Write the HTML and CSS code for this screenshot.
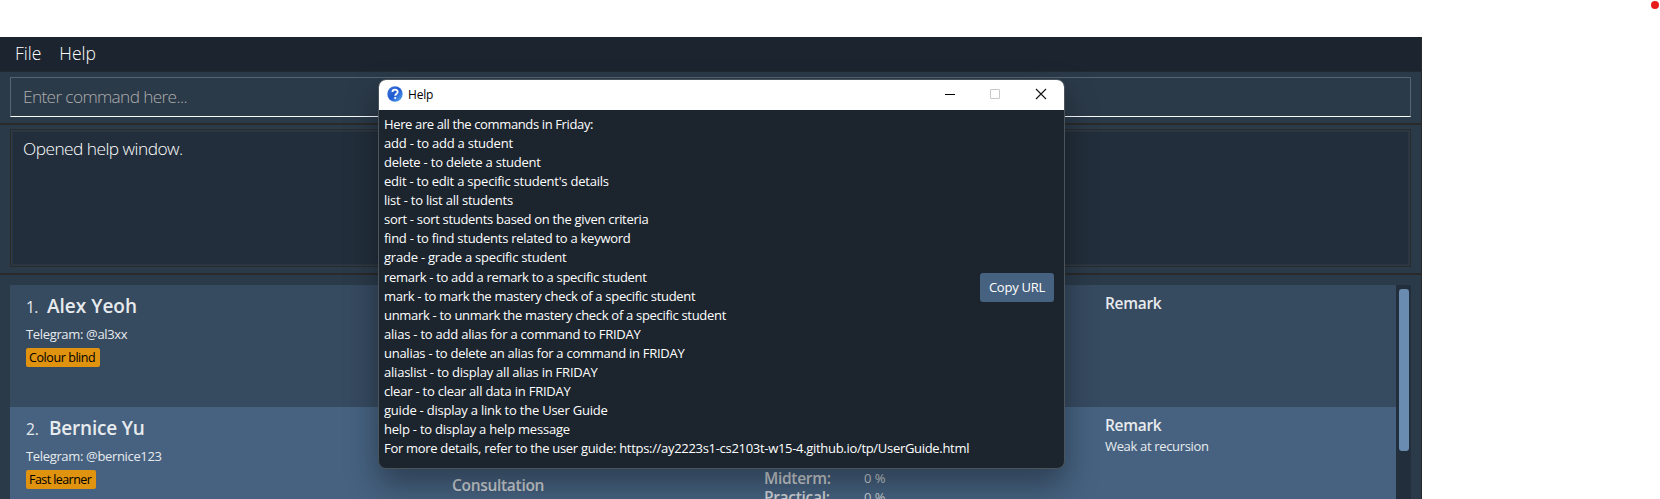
FILE: index.html
```html
<!DOCTYPE html>
<html lang="en">
<head>
<meta charset="utf-8">
<title>Friday</title>
<link rel="stylesheet" href="styles.css">
</head>
<body>
<main class="app">
  <nav class="menu"><span>File</span><span>Help</span></nav>
  <section class="command"><div class="command-box">Enter command here...</div></section>
  <section class="result"><div class="result-box">Opened help window.</div></section>
  <section class="students">
    <div class="cards">
      <article class="card">
        <div class="person">
          <h2><span class="num">1.</span><span class="name">Alex Yeoh</span></h2>
          <p class="small">Telegram: @al3xx</p>
          <div class="tag">Colour blind</div>
        </div>
        <div class="sessions"></div>
        <div class="grades"></div>
        <div class="remark"><h3>Remark</h3></div>
      </article>
      <article class="card alt">
        <div class="person">
          <h2><span class="num">2.</span><span class="name name-long">Bernice Yu</span></h2>
          <p class="small">Telegram: @bernice123</p>
          <div class="tag tag-tight">Fast learner</div>
        </div>
        <div class="sessions"><h3>Consultation</h3></div>
        <div class="grades">
          <div class="grade"><h3>Midterm:</h3><span class="score">0 %</span></div>
          <div class="grade"><h3>Practical:</h3><span class="score">0 %</span></div>
        </div>
        <div class="remark"><h3>Remark</h3><p class="small">Weak at recursion</p></div>
      </article>
    </div>
    <div class="scrollbar"><div class="thumb"></div></div>
  </section>
</main>

<div class="dialog">
  <header class="titlebar">
    <svg class="help-icon" width="16" height="16" viewBox="0 0 16 16">
      <defs><linearGradient id="blue" x1="0" y1="0" x2="1" y2="1"><stop offset="0" stop-color="#3f78d8"/><stop offset=".5" stop-color="#1f5ad0"/><stop offset="1" stop-color="#5fb0f5"/></linearGradient></defs>
      <circle cx="8" cy="8" r="7.7" fill="url(#blue)"/>
      <path d="M5.4 6.1C5.4 2.9 10.7 2.9 10.7 5.9C10.7 7.8 8.2 7.7 8.2 9.7" fill="none" stroke="#fff" stroke-width="1.8"/>
      <circle cx="8.2" cy="12" r="1.1" fill="#fff"/>
    </svg>
    <span class="title">Help</span>
    <svg class="controls" width="102" height="12" viewBox="0 0 102 12">
      <path d="M0 6.5H10" stroke="#000"/>
      <rect x="45.5" y="1.500" width="9" height="9" rx=".5" fill="none" stroke="#c8c8c8"/>
      <path d="M91 1L101 11M101 1L91 11" stroke="#111" stroke-width="1.1"/>
    </svg>
  </header>
  <div class="dialog-body">
    <div class="lines">
      <p>Here are all the commands in Friday:</p>
      <p>add - to add a student</p>
      <p>delete - to delete a student</p>
      <p>edit - to edit a specific student's details</p>
      <p>list - to list all students</p>
      <p>sort - sort students based on the given criteria</p>
      <p>find - to find students related to a keyword</p>
      <p>grade - grade a specific student</p>
      <p>remark - to add a remark to a specific student</p>
      <p>mark - to mark the mastery check of a specific student</p>
      <p>unmark - to unmark the mastery check of a specific student</p>
      <p>alias - to add alias for a command to FRIDAY</p>
      <p>unalias - to delete an alias for a command in FRIDAY</p>
      <p>aliaslist - to display all alias in FRIDAY</p>
      <p>clear - to clear all data in FRIDAY</p>
      <p>guide - display a link to the User Guide</p>
      <p>help - to display a help message</p>
      <p>For more details, refer to the user guide: https://ay2223s1-cs2103t-w15-4.github.io/tp/UserGuide.html</p>
    </div>
    <div class="copy">Copy URL</div>
  </div>
</div>
<div class="dot"></div>
</body>
</html>
```
FILE: styles.css
```css
* { box-sizing: border-box; }
body { margin: 0; height: 499px; overflow: hidden; background: #fff; font-family: "Open Sans", "Noto Sans", sans-serif; }
h2, h3, p { margin: 0; white-space: nowrap; }
span { white-space: nowrap; }

/* Main window */
.app { margin-top: 37px; width: 1422px; height: 462px; display: flex; flex-direction: column; background: #2b3a49; border-right: 1px solid #2a2a2a; overflow: hidden; }
.menu { flex: none; width: 1422px; height: 35px; padding-left: 15px; display: flex; gap: 18px; background: #1c252f; border-bottom: 1px solid #22292f; font-size: 17.5px; line-height: 33px; font-weight: 300; color: #fff; }
.command { flex: none; height: 53px; padding: 5px 10px; border-bottom: 2px solid #2a2a2a; }
.command-box { height: 40px; padding-left: 12px; border: 1px solid #556472; border-bottom-color: #fff; font-size: 17.3px; line-height: 37px; font-weight: 300; letter-spacing: -.65px; color: #adadad; }
.result { flex: none; height: 150px; padding: 4px 10px 5px; border-bottom: 2px solid #2a2a2a; }
.result-box { height: 138px; padding: 0 0 0 12px; border: 1px solid #2a2a2a; box-shadow: inset 0 0 0 1px #2b3a49, inset 0 0 0 2px #2c343c; background: #222e3b; font-size: 17.3px; line-height: 38px; font-weight: 300; letter-spacing: -.52px; color: #fff; }

/* Student list */
.students { flex: 1; min-height: 0; padding: 10px 10px 0; display: flex; }
.cards { width: 1386px; height: 214px; overflow: hidden; }
.card { height: 122px; padding-left: 16px; display: grid; grid-template-columns: 426px 312px 341px 1fr; background: #364a60; color: #e8ebee; }
.alt { background: #466280; }
.person { padding-top: 7px; }
.person h2 { height: 28px; line-height: 28px; display: flex; gap: 9px; align-items: baseline; font-weight: 600; }
.num { font-size: 15.5px; font-weight: 500; letter-spacing: -.5px; }
.alt .num { letter-spacing: 0; margin-right: 1px; }
.name { font-size: 19px; }
.name-long { letter-spacing: -.2px; }
.small { font-size: 13px; line-height: 18px; letter-spacing: -.34px; }
.person .small { margin-top: 5px; }
.remark .small { margin-top: 1px; }
.tag { width: 74px; height: 19px; margin-top: 5px; padding-left: 3px; border-radius: 2px; background: #df930f; color: #000; font-size: 12.5px; font-weight: 500; line-height: 19px; letter-spacing: -.42px; white-space: nowrap; }
.tag-tight { width: 70px; letter-spacing: -.57px; }
h3 { font-size: 15.5px; line-height: 22px; font-weight: 600; letter-spacing: -.3px; }
.remark { padding-top: 7px; }
.sessions { padding-top: 67px; }
.grades { padding-top: 61px; }
.sessions, .grades { color: #cfd3d7; }
.grade { display: flex; width: 200px; height: 19px; align-items: center; font-size: 13px; }
.grade h3 { width: 100px; }
.scrollbar { width: 15px; padding: 4px 2px 0 3px; background: #222e3b; }
.thumb { height: 162px; border-radius: 3px; background: #6a8cb0; }

/* Help window */
.dialog { position: absolute; left: 378px; top: 79px; width: 687px; height: 390px; border: 1px solid #4b535b; border-radius: 8px; overflow: hidden; background: #1c252e; box-shadow: 0 16px 32px rgba(0,0,0,.36); color: #fff; }
.titlebar { height: 30px; display: flex; align-items: center; padding: 0 17px 2px 8px; background: #fff; color: #000; font-size: 12px; }
.title { margin-left: 5px; letter-spacing: -.2px; }
.controls { margin-left: auto; }
.dialog-body { height: 357px; display: flex; justify-content: space-between; padding-left: 5px; }
.lines { padding-top: 5px; font-size: 13px; line-height: 19.06px; letter-spacing: -.22px; }
.lines p:nth-child(1) { letter-spacing: -.37px; }
.lines p:nth-child(6), .lines p:nth-child(n+9):nth-child(-n+11), .lines p:last-child { letter-spacing: -.305px; }
.lines p:nth-child(7), .lines p:nth-child(13) { letter-spacing: -.265px; }
.copy { flex: none; width: 74px; height: 29px; margin: 163px 10px 0 0; border-radius: 3px; background: #466280; text-align: center; font-size: 13px; line-height: 29px; letter-spacing: -.25px; }

.dot { position: absolute; left: 1651px; top: 1px; width: 8px; height: 8px; border-radius: 50%; background: #e81b1b; }
```
